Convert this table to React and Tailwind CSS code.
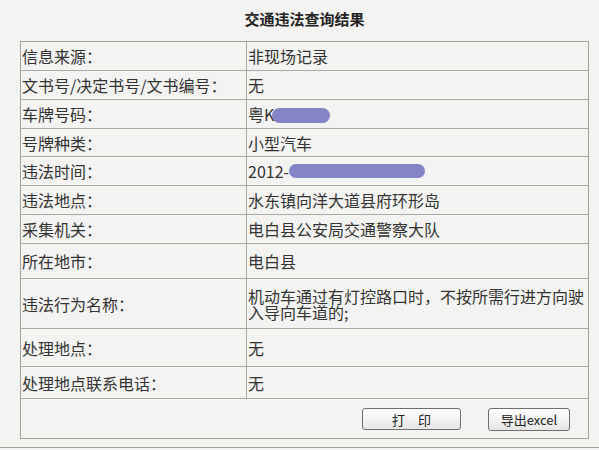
import React from 'react'

const rows = [
  { label: '信息来源：', value: '非现场记录', h: 'h-[29px]' },
  { label: '文书号/决定书号/文书编号：', value: '无', h: 'h-[29px]' },
  { label: '车牌号码：', value: 'plate', h: 'h-[29px]' },
  { label: '号牌种类：', value: '小型汽车', h: 'h-[28px]' },
  { label: '违法时间：', value: 'time', h: 'h-[29px]' },
  { label: '违法地点：', value: '水东镇向洋大道县府环形岛', h: 'h-[29px]' },
  { label: '采集机关：', value: '电白县公安局交通警察大队', h: 'h-[29px]' },
  { label: '所在地市：', value: '电白县', h: 'h-[35px]' },
  { label: '违法行为名称：', value: 'act', h: 'h-[50px]' },
  { label: '处理地点：', value: '无', h: 'h-[38px]' },
  { label: '处理地点联系电话：', value: '无', h: 'h-[32px]' },
]

function Value({ value }) {
  if (value === 'plate') {
    return (
      <span className="flex items-center">
        粤K
        <span className="inline-block w-[58px] h-[15px] -ml-[2px] mt-[3px] bg-[#8483c6] rounded-full blur-[0.5px]"></span>
      </span>
    )
  }
  if (value === 'time') {
    return (
      <span className="flex items-center">
        2012-
        <span className="inline-block w-[136px] h-[14px] bg-[#8483c6] rounded-full blur-[0.5px]"></span>
      </span>
    )
  }
  if (value === 'act') {
    return (
      <span className="block leading-[16px] pr-[2px]">
        机动车通过有灯控路口时，不按所需行进方向驶入导向车道的;
      </span>
    )
  }
  return <span>{value}</span>
}

export default function App() {
  return (
    <div
      className="w-[599px] h-[450px] overflow-hidden bg-[#f3f3f1] text-[#333]"
      style={{ fontFamily: '"Noto Sans CJK SC", "Liberation Sans", sans-serif' }}
    >
      <div className="h-[41px] flex items-center justify-center pl-[10px] pb-[3px] text-[15px] font-bold text-[#222]">
        交通违法查询结果
      </div>
      <div className="ml-[20px] w-[569px] border border-[#a2a29c]">
        {rows.map((row, i) => (
          <div key={i} className={`flex border-b border-[#a9a9a3] ${row.h}`}>
            <div className="w-[226px] shrink-0 border-r border-[#a9a9a3] flex items-center pl-[1px] text-[16px]">
              {row.label}
            </div>
            <div className="flex-1 flex items-center pl-[1px] text-[16px]">
              <Value value={row.value} />
            </div>
          </div>
        ))}
        <div className="h-[39px] flex items-center justify-end pr-[18px] gap-[27px] pt-[1px]">
          <button className="w-[99px] h-[22px] border border-[#6e6e6e] rounded-[3px] bg-gradient-to-b from-white to-[#e6e6e4] text-[13px] text-[#222] leading-none">
            打　印
          </button>
          <button className="w-[82px] h-[23px] border border-[#6e6e6e] rounded-[3px] bg-gradient-to-b from-white to-[#e6e6e4] text-[13px] text-[#222] leading-none">
            导出excel
          </button>
        </div>
      </div>
      <div className="mt-[8px] border-t border-[#a2a29c]"></div>
    </div>
  )
}
